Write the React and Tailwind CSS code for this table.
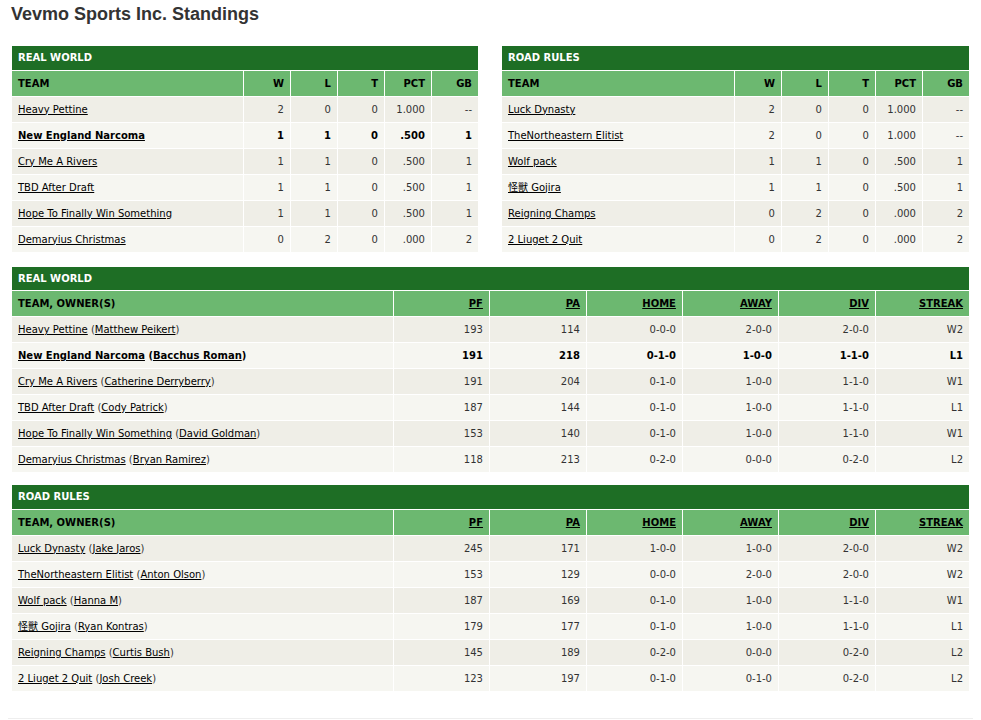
import React from "react";

const realWorld = [
  { team: "Heavy Pettine", owner: "Matthew Peikert", w: 2, l: 0, t: 0, pct: "1.000", gb: "--", pf: 193, pa: 114, home: "0-0-0", away: "2-0-0", div: "2-0-0", streak: "W2" },
  { team: "New England Narcoma", owner: "Bacchus Roman", w: 1, l: 1, t: 0, pct: ".500", gb: "1", pf: 191, pa: 218, home: "0-1-0", away: "1-0-0", div: "1-1-0", streak: "L1", mine: true },
  { team: "Cry Me A Rivers", owner: "Catherine Derryberry", w: 1, l: 1, t: 0, pct: ".500", gb: "1", pf: 191, pa: 204, home: "0-1-0", away: "1-0-0", div: "1-1-0", streak: "W1" },
  { team: "TBD After Draft", owner: "Cody Patrick", w: 1, l: 1, t: 0, pct: ".500", gb: "1", pf: 187, pa: 144, home: "0-1-0", away: "1-0-0", div: "1-1-0", streak: "L1" },
  { team: "Hope To Finally Win Something", owner: "David Goldman", w: 1, l: 1, t: 0, pct: ".500", gb: "1", pf: 153, pa: 140, home: "0-1-0", away: "1-0-0", div: "1-1-0", streak: "W1" },
  { team: "Demaryius Christmas", owner: "Bryan Ramirez", w: 0, l: 2, t: 0, pct: ".000", gb: "2", pf: 118, pa: 213, home: "0-2-0", away: "0-0-0", div: "0-2-0", streak: "L2" },
];

const roadRules = [
  { team: "Luck Dynasty", owner: "Jake Jaros", w: 2, l: 0, t: 0, pct: "1.000", gb: "--", pf: 245, pa: 171, home: "1-0-0", away: "1-0-0", div: "2-0-0", streak: "W2" },
  { team: "TheNortheastern Elitist", owner: "Anton Olson", w: 2, l: 0, t: 0, pct: "1.000", gb: "--", pf: 153, pa: 129, home: "0-0-0", away: "2-0-0", div: "2-0-0", streak: "W2" },
  { team: "Wolf pack", owner: "Hanna M", w: 1, l: 1, t: 0, pct: ".500", gb: "1", pf: 187, pa: 169, home: "0-1-0", away: "1-0-0", div: "1-1-0", streak: "W1" },
  { team: "怪獸 Gojira", owner: "Ryan Kontras", w: 1, l: 1, t: 0, pct: ".500", gb: "1", pf: 179, pa: 177, home: "0-1-0", away: "1-0-0", div: "1-1-0", streak: "L1" },
  { team: "Reigning Champs", owner: "Curtis Bush", w: 0, l: 2, t: 0, pct: ".000", gb: "2", pf: 145, pa: 189, home: "0-2-0", away: "0-0-0", div: "0-2-0", streak: "L2" },
  { team: "2 Liuget 2 Quit", owner: "Josh Creek", w: 0, l: 2, t: 0, pct: ".000", gb: "2", pf: 123, pa: 197, home: "0-1-0", away: "0-1-0", div: "0-2-0", streak: "L2" },
];

const cell = "border border-white h-[26px] px-[6px] py-0";
const rowBg = (i) => (i % 2 === 0 ? "bg-[#efeee7]" : "bg-[#f6f6f1]");

function TeamName({ name }) {
  return <a className="underline text-black">{name}</a>;
}

function Standings({ title, rows }) {
  return (
    <table className="w-full table-fixed border-collapse">
      <colgroup>
        <col />
        <col className="w-[47px]" />
        <col className="w-[47px]" />
        <col className="w-[47px]" />
        <col className="w-[47px]" />
        <col className="w-[47px]" />
      </colgroup>
      <thead>
        <tr className="bg-[#1e6e25] text-white">
          <th colSpan={6} className="border border-white border-t-0 h-[24px] px-[6px] text-left font-bold">{title}</th>
        </tr>
        <tr className="bg-[#6cb870] text-black font-bold">
          <th className={`${cell} text-left`}>TEAM</th>
          <th className={`${cell} text-right`}>W</th>
          <th className={`${cell} text-right`}>L</th>
          <th className={`${cell} text-right`}>T</th>
          <th className={`${cell} text-right`}>PCT</th>
          <th className={`${cell} text-right`}>GB</th>
        </tr>
      </thead>
      <tbody>
        {rows.map((r, i) => (
          <tr key={r.team} className={`${rowBg(i)} ${r.mine ? "font-bold text-black" : "text-[#333]"}`}>
            <td className={`${cell} text-left`}><TeamName name={r.team} /></td>
            <td className={`${cell} text-right`}>{r.w}</td>
            <td className={`${cell} text-right`}>{r.l}</td>
            <td className={`${cell} text-right`}>{r.t}</td>
            <td className={`${cell} text-right`}>{r.pct}</td>
            <td className={`${cell} text-right`}>{r.gb}</td>
          </tr>
        ))}
      </tbody>
    </table>
  );
}

function Details({ title, rows }) {
  const cols = ["PF", "PA", "HOME", "AWAY", "DIV", "STREAK"];
  return (
    <table className="w-full table-fixed border-collapse">
      <colgroup>
        <col />
        <col className="w-[96px]" />
        <col className="w-[97px]" />
        <col className="w-[96px]" />
        <col className="w-[96px]" />
        <col className="w-[97px]" />
        <col className="w-[94px]" />
      </colgroup>
      <thead>
        <tr className="bg-[#1e6e25] text-white">
          <th colSpan={7} className="border border-white border-t-0 h-[24px] px-[6px] text-left font-bold">{title}</th>
        </tr>
        <tr className="bg-[#6cb870] text-black font-bold">
          <th className={`${cell} text-left`}>TEAM, OWNER(S)</th>
          {cols.map((c) => (
            <th key={c} className={`${cell} text-right`}><a className="underline">{c}</a></th>
          ))}
        </tr>
      </thead>
      <tbody>
        {rows.map((r, i) => (
          <tr key={r.team} className={`${rowBg(i)} ${r.mine ? "font-bold text-black" : "text-[#333]"}`}>
            <td className={`${cell} text-left`}>
              <TeamName name={r.team} /> (<TeamName name={r.owner} />)
            </td>
            <td className={`${cell} text-right`}>{r.pf}</td>
            <td className={`${cell} text-right`}>{r.pa}</td>
            <td className={`${cell} text-right`}>{r.home}</td>
            <td className={`${cell} text-right`}>{r.away}</td>
            <td className={`${cell} text-right`}>{r.div}</td>
            <td className={`${cell} text-right`}>{r.streak}</td>
          </tr>
        ))}
      </tbody>
    </table>
  );
}

export default function App() {
  return (
    <div className="min-h-screen bg-white px-[11px] pt-[3px] text-[10px] font-['DejaVu_Sans','Noto_Sans_CJK_SC',sans-serif]">
      <h1 className="text-[18px] leading-[22px] font-bold text-[#333] font-['Liberation_Sans',Arial,sans-serif] mb-[21px]">
        Vevmo Sports Inc. Standings
      </h1>

      <div className="flex gap-[22px] mb-[14px]">
        <div className="w-[470px]">
          <Standings title="REAL WORLD" rows={realWorld} />
        </div>
        <div className="w-[471px]">
          <Standings title="ROAD RULES" rows={roadRules} />
        </div>
      </div>

      <div className="mb-[12px]">
        <Details title="REAL WORLD" rows={realWorld} />
      </div>
      <div className="mb-[26px]">
        <Details title="ROAD RULES" rows={roadRules} />
      </div>

      <div className="border-t border-[#eeeeee] mx-[-3px]" />
    </div>
  );
}
